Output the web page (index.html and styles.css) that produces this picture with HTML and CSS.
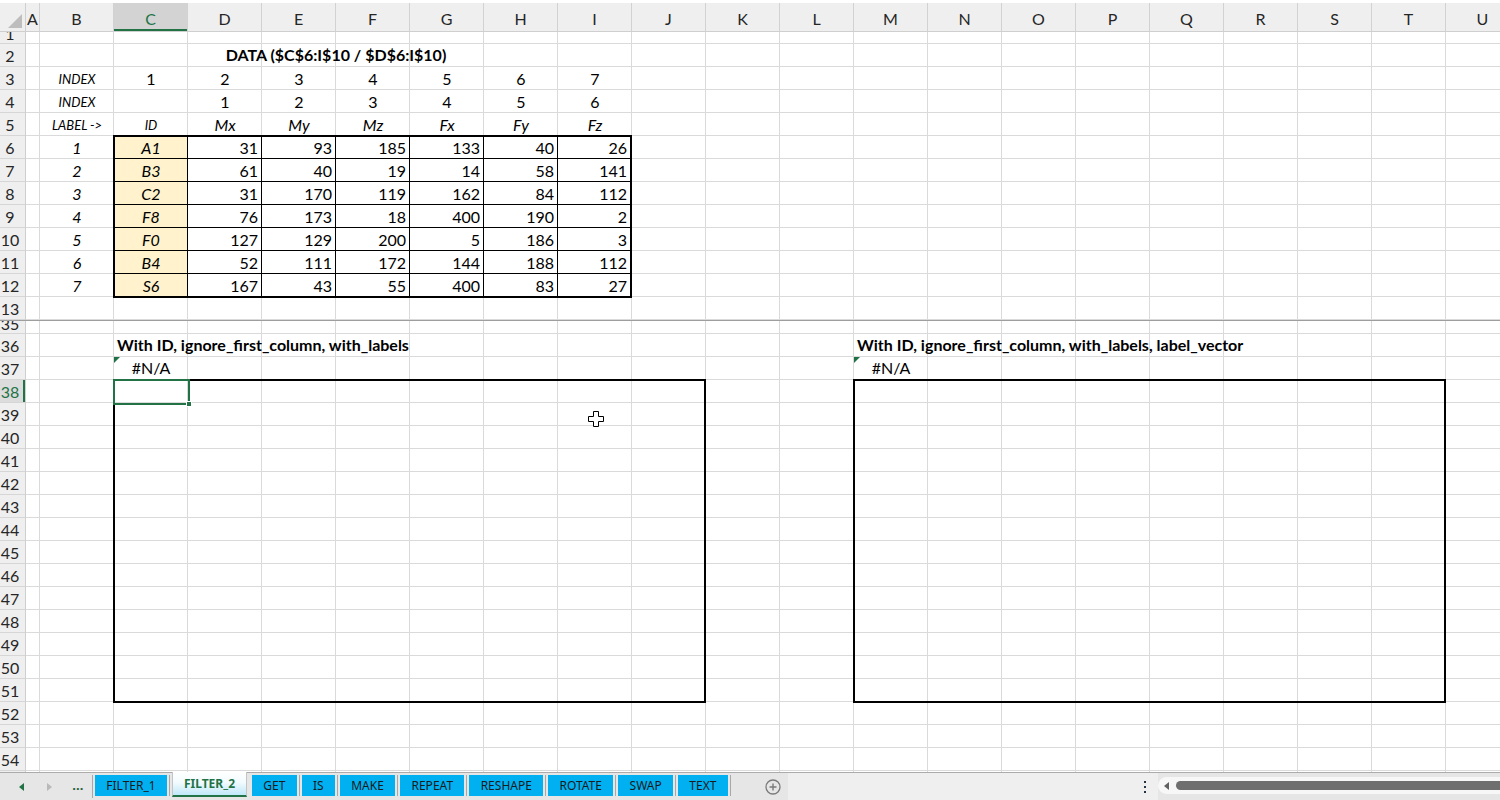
FILE: index.html
```html
<!DOCTYPE html>
<html lang="en">
<head>
  <meta charset="UTF-8" />
  <title>FILTER_2</title>
  <link rel="stylesheet" href="styles.css">
</head>
<body>
  <div class="book">
    <!-- column letters -->
    <div class="col-bar">
      <div class="corner"><span class="corner-tri"></span></div>
      <div class="col-head col-a">A</div>
      <div class="col-head">B</div>
      <div class="col-head active">C</div>
      <div class="col-head">D</div>
      <div class="col-head">E</div>
      <div class="col-head">F</div>
      <div class="col-head">G</div>
      <div class="col-head">H</div>
      <div class="col-head">I</div>
      <div class="col-head">J</div>
      <div class="col-head">K</div>
      <div class="col-head">L</div>
      <div class="col-head">M</div>
      <div class="col-head">N</div>
      <div class="col-head">O</div>
      <div class="col-head">P</div>
      <div class="col-head">Q</div>
      <div class="col-head">R</div>
      <div class="col-head">S</div>
      <div class="col-head">T</div>
      <div class="col-head">U</div>
    </div>

    <!-- frozen part: rows 1-13 -->
    <div class="pane pane-top">
      <div class="row-heads">
        <div class="row-head short"><span>1</span></div>
        <div class="row-head">2</div>
        <div class="row-head">3</div>
        <div class="row-head">4</div>
        <div class="row-head">5</div>
        <div class="row-head">6</div>
        <div class="row-head">7</div>
        <div class="row-head">8</div>
        <div class="row-head">9</div>
        <div class="row-head">10</div>
        <div class="row-head">11</div>
        <div class="row-head">12</div>
        <div class="row-head">13</div>
      </div>
      <div class="cells cells-top">
        <div class="data-title">DATA ($C$6:I$10 / $D$6:I$10)</div>

        <div class="head-block">
          <div class="lbl">INDEX</div><div>1</div><div>2</div><div>3</div><div>4</div><div>5</div><div>6</div><div>7</div>
          <div class="lbl">INDEX</div><div></div><div>1</div><div>2</div><div>3</div><div>4</div><div>5</div><div>6</div>
          <div class="lbl">LABEL -&gt;</div><div class="lbl">ID</div><div class="it">Mx</div><div class="it">My</div><div class="it">Mz</div><div class="it">Fx</div><div class="it">Fy</div><div class="it">Fz</div>
        </div>

        <div class="row-index">
          <div>1</div><div>2</div><div>3</div><div>4</div><div>5</div><div>6</div><div>7</div>
        </div>

        <div class="data-box">
          <div class="id">A1</div><div>31</div><div>93</div><div>185</div><div>133</div><div>40</div><div>26</div>
          <div class="id">B3</div><div>61</div><div>40</div><div>19</div><div>14</div><div>58</div><div>141</div>
          <div class="id">C2</div><div>31</div><div>170</div><div>119</div><div>162</div><div>84</div><div>112</div>
          <div class="id">F8</div><div>76</div><div>173</div><div>18</div><div>400</div><div>190</div><div>2</div>
          <div class="id">F0</div><div>127</div><div>129</div><div>200</div><div>5</div><div>186</div><div>3</div>
          <div class="id">B4</div><div>52</div><div>111</div><div>172</div><div>144</div><div>188</div><div>112</div>
          <div class="id">S6</div><div>167</div><div>43</div><div>55</div><div>400</div><div>83</div><div>27</div>
        </div>
      </div>
    </div>

    <div class="split"></div>

    <!-- scrolled part: rows 35-54 -->
    <div class="pane pane-bottom">
      <div class="row-heads">
        <div class="row-head short"><span>35</span></div>
        <div class="row-head">36</div>
        <div class="row-head">37</div>
        <div class="row-head active">38</div>
        <div class="row-head">39</div>
        <div class="row-head">40</div>
        <div class="row-head">41</div>
        <div class="row-head">42</div>
        <div class="row-head">43</div>
        <div class="row-head">44</div>
        <div class="row-head">45</div>
        <div class="row-head">46</div>
        <div class="row-head">47</div>
        <div class="row-head">48</div>
        <div class="row-head">49</div>
        <div class="row-head">50</div>
        <div class="row-head">51</div>
        <div class="row-head">52</div>
        <div class="row-head">53</div>
        <div class="row-head">54</div>
      </div>
      <div class="cells cells-bottom">
        <div class="result-title left">With ID, ignore_first_column, with_labels</div>
        <div class="result-value left"><span class="err-flag"></span>#N/A</div>
        <div class="result-box left"></div>
        <div class="active-cell"><span class="fill-handle"></span></div>

        <div class="result-title right">With ID, ignore_first_column, with_labels, label_vector</div>
        <div class="result-value right"><span class="err-flag"></span>#N/A</div>
        <div class="result-box right"></div>

        <svg class="pointer" width="16" height="16" viewBox="0 0 16 16">
          <polygon points="5.5,0.5 10.5,0.5 10.5,5.5 15.5,5.5 15.5,10.5 10.5,10.5 10.5,15.5 5.5,15.5 5.5,10.5 0.5,10.5 0.5,5.5 5.5,5.5" fill="#fff" stroke="#000" stroke-width="1" />
        </svg>
      </div>
    </div>

    <!-- sheet tabs + horizontal scroll -->
    <div class="tab-bar">
      <div class="tab-nav">
        <span class="nav-btn">
          <svg width="5" height="8" viewBox="0 0 5 8"><polygon points="5,0 5,8 0,4" fill="#217346" /></svg>
        </span>
        <span class="nav-btn">
          <svg width="5" height="8" viewBox="0 0 5 8"><polygon points="0,0 0,8 5,4" fill="#b9b9b9" /></svg>
        </span>
        <span class="nav-btn more">...</span>
      </div>
      <div class="tabs">
        <div class="tab">FILTER_1</div>
        <div class="tab current">FILTER_2</div>
        <div class="tab">GET</div>
        <div class="tab">IS</div>
        <div class="tab">MAKE</div>
        <div class="tab">REPEAT</div>
        <div class="tab">RESHAPE</div>
        <div class="tab">ROTATE</div>
        <div class="tab">SWAP</div>
        <div class="tab">TEXT</div>
      </div>
      <div class="add-sheet">
        <svg width="16" height="16" viewBox="0 0 16 16">
          <circle cx="8" cy="8" r="7" fill="none" stroke="#7a7a7a" stroke-width="1.3" />
          <path d="M8 4.5v7M4.5 8h7" stroke="#7a7a7a" stroke-width="1.4" />
        </svg>
      </div>
      <div class="tab-spacer"></div>
      <div class="splitter">
        <svg width="4" height="12" viewBox="0 0 4 12"><rect x="1" y="0" width="2" height="2" fill="#243447" /><rect x="1" y="5" width="2" height="2" fill="#243447" /><rect x="1" y="10" width="2" height="2" fill="#243447" /></svg>
      </div>
      <div class="hscroll">
        <svg width="6" height="8" viewBox="0 0 6 8"><polygon points="5,0 5,8 0,4" fill="#606060" /></svg>
        <div class="thumb"></div>
      </div>
    </div>
  </div>
</body>
</html>
```

FILE: styles.css
```css
* {
  box-sizing: border-box;
}

body {
  margin: 0;
  background: #fff;
  font-family: Lato, 'Liberation Sans', sans-serif;
  font-size: 15px;
  color: #000;
  overflow: hidden;
}

.book {
  width: 1500px;
  height: 800px;
  overflow: hidden;
  display: flex;
  flex-direction: column;
}

/* column letters */
.col-bar {
  display: flex;
  flex: none;
  height: 32px;
  background: #efefef;
  border-top: 3px solid #fff;
  border-bottom: 1px solid #cfcfcf;
  font-size: 16px;
}

.corner {
  flex: none;
  width: 26px;
  border-right: 1px solid #cfcfcf;
  display: flex;
  align-items: flex-end;
  justify-content: flex-end;
  padding: 0 3px 3px 0;
}

.corner-tri {
  width: 0;
  height: 0;
  border-left: 14px solid transparent;
  border-bottom: 14px solid #bdbdbd;
}

.col-head {
  flex: none;
  width: 74px;
  display: flex;
  align-items: center;
  justify-content: center;
  padding-top: 2px;
  border-right: 1px solid #d2d2d2;
  color: #262626;
}

.col-head.col-a {
  width: 14px;
}

.col-head.active {
  background: #d3d3d3;
  color: #217346;
  box-shadow: inset 0 -2px #217346;
}

/* panes */
.pane {
  display: flex;
  flex: none;
  overflow: hidden;
}

.pane-top {
  height: 288px;
}

.pane-bottom {
  height: 451px;
}

.split {
  flex: none;
  height: 1px;
  background: #9e9e9e;
}

.row-heads {
  flex: none;
  width: 26px;
  background: #efefef;
  border-right: 1px solid #cfcfcf;
  font-size: 16px;
}

.row-head {
  height: 23px;
  border-bottom: 1px solid #d6d6d6;
  display: flex;
  align-items: center;
  justify-content: center;
  padding-right: 5px;
  color: #262626;
  overflow: hidden;
}

.row-head.short {
  align-items: flex-end;
}

.row-head.short span {
  line-height: 20px;
  margin-bottom: -1px;
}

.pane-top .row-head.short {
  height: 12px;
}

.pane-bottom .row-head.short {
  height: 13px;
}

.row-head.active {
  background: #dcdcdc;
  color: #217346;
  box-shadow: inset -2px 0 #217346;
}

/* cell grid */
.cells {
  position: relative;
  flex: none;
  display: grid;
  grid-template-columns: 14px repeat(20, 74px);
  font-size: 16px;
  background-image:
    linear-gradient(to right, transparent 73px, #dadada 73px),
    linear-gradient(to bottom, transparent 22px, #dadada 22px);
  background-size: 74px 100%, 100% 23px;
  background-position: 14px 0, 0 12px;
}

.cells-top {
  grid-template-rows: 12px repeat(12, 23px);
}

.cells-bottom {
  grid-template-rows: 13px repeat(19, 23px);
  background-position: 14px 0, 0 13px;
}

.data-title {
  grid-column: 2 / 10;
  grid-row: 2;
  text-align: center;
  font-weight: bold;
  line-height: 22px;
}

.head-block {
  grid-column: 2 / 10;
  grid-row: 3 / 6;
  display: grid;
  grid-template-columns: repeat(8, 74px);
  grid-auto-rows: 23px;
}

.head-block div,
.row-index div {
  display: flex;
  align-items: center;
  justify-content: center;
}

.lbl {
  font-style: italic;
  font-size: 13px;
}

.it,
.row-index {
  font-style: italic;
}

.row-index {
  grid-column: 2;
  grid-row: 6 / 13;
  display: grid;
  grid-auto-rows: 23px;
}

.data-box {
  grid-column: 3 / 10;
  grid-row: 6 / 13;
  margin: -1px 0 -1px -1px;
  border: 2px solid #000;
  background: #000;
  display: grid;
  grid-template-columns: 72px repeat(5, 73px) 72px;
  grid-template-rows: 21px repeat(6, 22px);
  gap: 1px;
}

.data-box div {
  background: #fff;
  display: flex;
  align-items: center;
  justify-content: flex-end;
  padding-right: 3px;
}

.data-box .id {
  background: #fff2cc;
  font-style: italic;
  justify-content: center;
  padding: 0;
}

/* result blocks */
.result-title {
  grid-row: 2;
  font-weight: bold;
  line-height: 22px;
  padding-left: 3px;
  white-space: nowrap;
}

.result-value {
  grid-row: 3;
  position: relative;
  line-height: 22px;
  text-align: center;
}

.result-box {
  grid-row: 4 / 18;
  margin: -1px 0 -1px -1px;
  border: 2px solid #000;
}

.left.result-title {
  grid-column: 3 / 11;
}

.left.result-value {
  grid-column: 3;
}

.left.result-box {
  grid-column: 3 / 11;
}

.right.result-title {
  grid-column: 13 / 21;
}

.right.result-value {
  grid-column: 13;
}

.right.result-box {
  grid-column: 13 / 21;
}

.err-flag {
  position: absolute;
  left: 0;
  top: 0;
  width: 0;
  height: 0;
  border-top: 6px solid #1e7145;
  border-right: 6px solid transparent;
}

.active-cell {
  grid-column: 3;
  grid-row: 4;
  margin: -1px -2px -2px -1px;
  border: 2px solid #217346;
  position: relative;
  z-index: 2;
}

.fill-handle {
  position: absolute;
  right: -4px;
  bottom: -4px;
  width: 6px;
  height: 6px;
  background: #217346;
  border: 1px solid #fff;
}

.pointer {
  position: absolute;
  left: 562px;
  top: 90px;
}

/* sheet tabs */
.tab-bar {
  flex: none;
  height: 28px;
  display: flex;
  background: #e6e6e6;
  border-top: 1px solid #ababab;
  font-family: 'Noto Sans', 'Open Sans', sans-serif;
  font-size: 12px;
}

.tab-nav {
  flex: none;
  width: 92px;
  display: flex;
  align-items: center;
  padding-left: 7px;
}

.nav-btn {
  width: 29px;
  display: flex;
  justify-content: center;
  align-items: center;
}

.nav-btn.more {
  color: #1f5f3c;
  font-weight: bold;
  font-size: 13px;
  padding-bottom: 4px;
}

.tabs {
  flex: none;
  display: flex;
  align-items: flex-start;
  border-left: 1px solid #a8a8a8;
  height: 23px;
  margin-top: 2px;
  padding-left: 2px;
}

.tab {
  position: relative;
  height: 21px;
  line-height: 21px;
  padding: 0 11.3px;
  margin-right: 5px;
  background: #00b0f0;
  color: #1a1a1a;
}

.tab::after {
  content: '';
  position: absolute;
  right: -3px;
  top: 0;
  height: 21px;
  width: 1px;
  background: #a8a8a8;
}

.tab.current {
  margin-top: -3px;
  height: 25px;
  line-height: 24px;
  padding: 0 11px;
  background: linear-gradient(#ffffff, #f2fbff 45%, #bfe8f8);
  border: 1px solid #c4c4c4;
  border-top: none;
  border-bottom: 2px solid #217346;
  color: #217346;
  font-weight: bold;
}

.tab.current::after {
  display: none;
}

.add-sheet {
  flex: none;
  width: 55px;
  display: flex;
  align-items: center;
  justify-content: flex-end;
  padding-right: 7px;
}

.tab-spacer {
  flex: 1;
  background: #efefef;
}

.splitter {
  flex: none;
  width: 27px;
  display: flex;
  align-items: center;
  justify-content: center;
  background: #efefef;
}

.hscroll {
  flex: none;
  width: 342px;
  margin: 4px 0 6px;
  background: #f7f7f7;
  border-radius: 9px 0 0 9px;
  display: flex;
  align-items: center;
  padding-left: 6px;
  gap: 6px;
}

.thumb {
  flex: 1;
  height: 9px;
  background: #6f6f6f;
  border-radius: 5px 0 0 5px;
}
```
